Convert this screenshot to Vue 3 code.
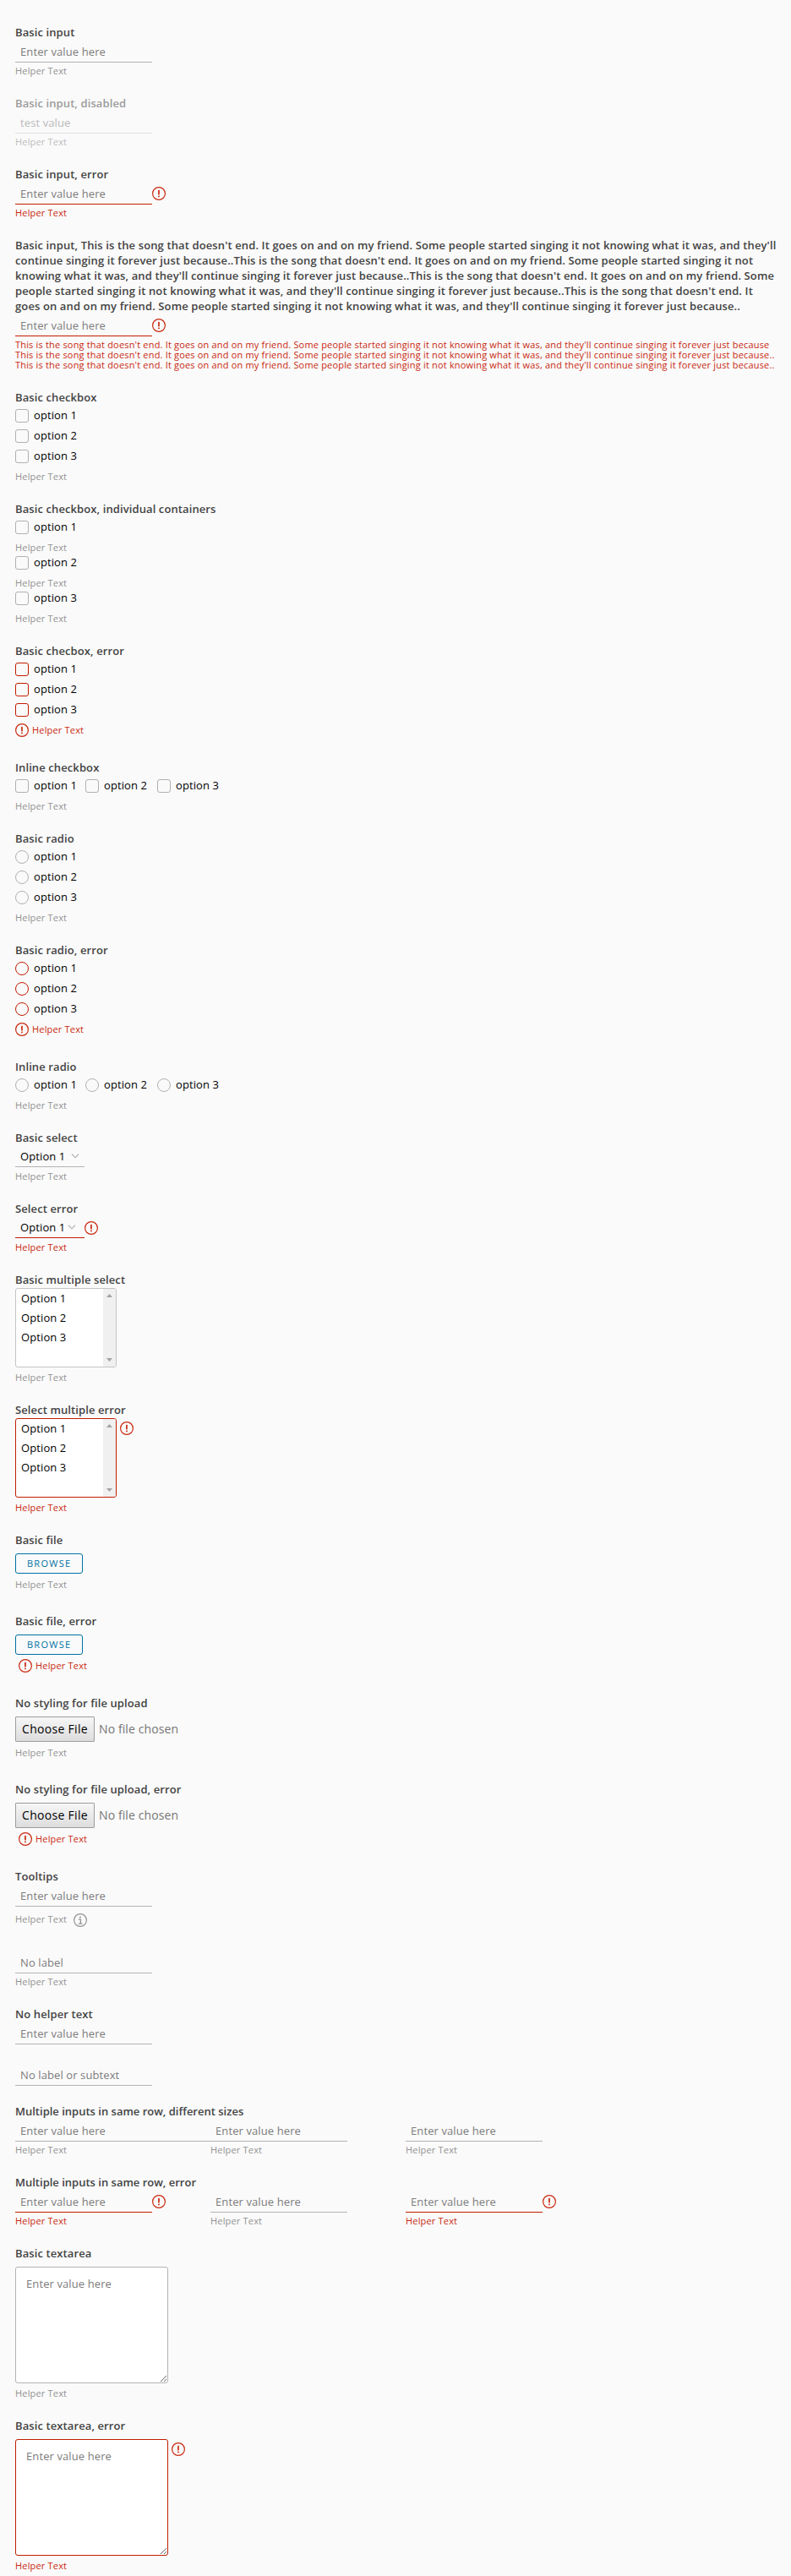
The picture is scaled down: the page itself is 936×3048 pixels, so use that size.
<script setup>
import { h } from 'vue'

const AlertIcon = () => h('svg', { class: 'alert', viewBox: '0 0 16 16', width: 16, height: 16 }, [
  h('circle', { cx: 8, cy: 8, r: 7.4, fill: 'none', stroke: '#c9280e', 'stroke-width': 1.2 }),
  h('rect', { x: 7.1, y: 3.8, width: 1.7, height: 5.6, rx: 0.4, fill: '#c9280e' }),
  h('rect', { x: 7.1, y: 10.5, width: 1.7, height: 1.7, rx: 0.5, fill: '#c9280e' }),
])

const options = [1, 2, 3]
const hint = 'Enter value here'

const longLabel = [
  "Basic input, This is the song that doesn't end. It goes on and on my friend. Some people started singing it not knowing what it was, and they'll",
  "continue singing it forever just because..This is the song that doesn't end. It goes on and on my friend. Some people started singing it not",
  "knowing what it was, and they'll continue singing it forever just because..This is the song that doesn't end. It goes on and on my friend. Some",
  "people started singing it not knowing what it was, and they'll continue singing it forever just because..This is the song that doesn't end. It",
  "goes on and on my friend. Some people started singing it not knowing what it was, and they'll continue singing it forever just because..",
]
const song = "This is the song that doesn't end. It goes on and on my friend. Some people started singing it not knowing what it was, and they'll continue singing it forever just because"
const longHelper = [song, song + '..', song + '..']

const textFields = [
  { label: ['Basic input'], helper: ['Helper Text'] },
  { label: ['Basic input, disabled'], helper: ['Helper Text'], disabled: true, value: 'test value' },
  { label: ['Basic input, error'], helper: ['Helper Text'], error: true },
  { label: longLabel, helper: longHelper, error: true, long: true },
]

const choiceGroups = [
  { label: 'Basic checkbox', type: 'checkbox' },
  { label: 'Basic checkbox, individual containers', type: 'checkbox', separate: true },
  { label: 'Basic checbox, error', type: 'checkbox', error: true },
  { label: 'Inline checkbox', type: 'checkbox', inline: true },
  { label: 'Basic radio', type: 'radio' },
  { label: 'Basic radio, error', type: 'radio', error: true },
  { label: 'Inline radio', type: 'radio', inline: true },
]

const selects = [
  { label: 'Basic select' },
  { label: 'Select error', error: true },
]
const multiSelects = [
  { label: 'Basic multiple select' },
  { label: 'Select multiple error', error: true },
]
const files = [
  { label: 'Basic file' },
  { label: 'Basic file, error', error: true },
]
const plainFiles = [
  { label: 'No styling for file upload' },
  { label: 'No styling for file upload, error', error: true },
]
const rows = [
  { label: 'Multiple inputs in same row, different sizes', cells: [{ wide: true }, {}, {}] },
  { label: 'Multiple inputs in same row, error', cells: [{ error: true }, {}, { error: true }] },
]
const areas = [
  { label: 'Basic textarea' },
  { label: 'Basic textarea, error', error: true },
]
</script>

<template>
  <form class="forms">
    <section v-for="f in textFields" :key="f.label[0]" class="group" :class="{ error: f.error, disabled: f.disabled, long: f.long }">
      <label class="label"><span v-for="l in f.label" :key="l" class="line">{{ l }}</span></label>
      <div class="control">
        <input class="input" type="text" :placeholder="hint" :value="f.value" :disabled="f.disabled">
        <AlertIcon v-if="f.error" />
      </div>
      <div class="helper"><span v-for="(l, i) in f.helper" :key="i" class="line">{{ l }}</span></div>
    </section>

    <section v-for="g in choiceGroups" :key="g.label" class="group" :class="{ error: g.error }">
      <label class="label">{{ g.label }}</label>
      <div class="choices" :class="{ inline: g.inline }">
        <template v-for="n in options" :key="n">
          <label class="choice"><span class="box" :class="g.type"></span><span class="caption">option {{ n }}</span></label>
          <div v-if="g.separate" class="helper spaced">Helper Text</div>
        </template>
      </div>
      <div v-if="g.error" class="helper with-icon"><AlertIcon />Helper Text</div>
      <div v-else-if="!g.separate" class="helper spaced">Helper Text</div>
    </section>

    <section v-for="s in selects" :key="s.label" class="group" :class="{ error: s.error }">
      <label class="label">{{ s.label }}</label>
      <div class="control select-row">
        <div class="select">
          <span>Option 1</span>
          <svg class="chevron" viewBox="0 0 10 6" width="10" height="6"><path d="M1 0.7 L5 4.8 L9 0.7" fill="none" stroke="#a8a8a8" stroke-width="1.1" /></svg>
        </div>
        <AlertIcon v-if="s.error" />
      </div>
      <div class="helper">Helper Text</div>
    </section>

    <section v-for="m in multiSelects" :key="m.label" class="group" :class="{ error: m.error }">
      <label class="label">{{ m.label }}</label>
      <div class="multi-row">
        <div class="listbox">
          <div class="list"><div v-for="n in options" :key="n" class="item">Option {{ n }}</div></div>
          <div class="scrollbar">
            <svg viewBox="0 0 7 4" width="7" height="4"><path d="M0 4 L3.5 0 L7 4Z" fill="#a3a3a3" /></svg>
            <svg viewBox="0 0 7 4" width="7" height="4"><path d="M0 0 L3.5 4 L7 0Z" fill="#a3a3a3" /></svg>
          </div>
        </div>
        <AlertIcon v-if="m.error" />
      </div>
      <div class="helper spaced">Helper Text</div>
    </section>

    <section v-for="f in files" :key="f.label" class="group file" :class="{ error: f.error }">
      <label class="label">{{ f.label }}</label>
      <button type="button" class="browse">BROWSE</button>
      <div class="helper" :class="f.error ? 'file-error' : 'file-helper'"><AlertIcon v-if="f.error" />Helper Text</div>
    </section>

    <section v-for="f in plainFiles" :key="f.label" class="group file" :class="{ error: f.error }">
      <label class="label">{{ f.label }}</label>
      <div class="native"><button type="button" class="choose">Choose File</button><span class="status">No file chosen</span></div>
      <div class="helper" :class="f.error ? 'file-error' : 'file-helper'"><AlertIcon v-if="f.error" />Helper Text</div>
    </section>

    <section class="group tooltip">
      <label class="label">Tooltips</label>
      <div class="control"><input class="input" type="text" :placeholder="hint"></div>
      <div class="helper tip">
        <span class="caption">Helper Text</span>
        <svg viewBox="0 0 16 16" width="16" height="16">
          <circle cx="8" cy="8" r="7.4" fill="none" stroke="#929292" stroke-width="1.2" />
          <circle cx="7.9" cy="4.5" r="1.1" fill="#929292" />
          <path d="M6 7.1 H8.4 V11.8 M5.7 12 H10.4" fill="none" stroke="#929292" stroke-width="1.25" />
        </svg>
      </div>
    </section>

    <section class="group">
      <div class="control"><input class="input" type="text" placeholder="No label"></div>
      <div class="helper">Helper Text</div>
    </section>

    <section class="group bare">
      <label class="label">No helper text</label>
      <div class="control"><input class="input" type="text" :placeholder="hint"></div>
    </section>

    <section class="group unlabelled">
      <div class="control"><input class="input" type="text" placeholder="No label or subtext"></div>
    </section>

    <section v-for="r in rows" :key="r.label" class="group">
      <label class="label tight">{{ r.label }}</label>
      <div class="columns">
        <div v-for="(c, i) in r.cells" :key="i" :class="{ error: c.error }">
          <div class="control">
            <input class="input" :class="{ wide: c.wide }" type="text" :placeholder="hint">
            <AlertIcon v-if="c.error" />
          </div>
          <div class="helper">Helper Text</div>
        </div>
      </div>
    </section>

    <section v-for="a in areas" :key="a.label" class="group" :class="{ error: a.error }">
      <label class="label">{{ a.label }}</label>
      <div class="area-row">
        <textarea class="area" :placeholder="hint"></textarea>
        <AlertIcon v-if="a.error" />
      </div>
      <div class="helper spaced">Helper Text</div>
    </section>
  </form>
</template>

<style>
body { background: #fafafa; }
</style>

<style scoped>
.forms {
  padding: 30px 0 0 18px;
  font: 400 13px/24px "Open Sans", "Liberation Sans", sans-serif;
  letter-spacing: 0.1px;
  color: #000;
  white-space: nowrap;
}
.group { display: flex; flex-direction: column; align-items: flex-start; margin-bottom: 24px; }
.label { display: block; margin-top: -1px; padding-bottom: 1px; font-weight: 600; line-height: 18px; color: #434343; }
.label.tight { letter-spacing: 0; }
.line { display: block; }
.long .label { letter-spacing: 0.12px; }
.control { display: flex; align-items: flex-start; margin-top: 2px; }
.control :deep(.alert) { margin-top: 3px; }
.alert, svg { display: block; flex: none; }
.caption { padding-bottom: 2px; }
.status { padding-bottom: 1px; }
.input {
  box-sizing: border-box; width: 162px; height: 24px; margin: 0; padding: 0 6px 1px;
  border: 0; border-bottom: 1px solid #b3b3b3; border-radius: 0; outline: 0; background: transparent;
  font: inherit; letter-spacing: inherit; color: #000;
}
.input.wide { width: 231px; }
.input::placeholder, .area::placeholder { color: #7c7c7c; opacity: 1; }
.helper { margin-top: 4px; font-size: 11px; line-height: 12px; letter-spacing: 0.18px; color: #929292; }
.helper.spaced { margin-top: 6px; }
.helper.with-icon { display: flex; align-items: center; gap: 4px; height: 24px; margin-top: 0; }

.error .input, .error .select { border-bottom-color: #c21d00; }
.error .helper { color: #c9280e; }
.disabled .label { color: #9c9c9c; }
.disabled .input { border-color: #e0e0e0; color: #b9b9b9; }
.disabled .helper { color: #bcbcbc; }

.choices { display: flex; flex-direction: column; }
.choices.inline { display: grid; grid-template-columns: 83px 85px auto; }
.choice { display: flex; align-items: center; gap: 6px; height: 24px; }
.box { box-sizing: border-box; flex: none; width: 16px; height: 16px; border: 1px solid #b0b0b0; border-radius: 3px; }
.box.radio { border-radius: 50%; }
.error .box { border-color: #c21d00; }

.select-row { margin-top: 0; }
.select-row :deep(.alert) { margin-top: 5px; }
.select {
  box-sizing: border-box; display: flex; align-items: center; justify-content: space-between;
  width: 82px; height: 25px; margin-bottom: 1px; padding: 0 6px; border-bottom: 1px solid #b3b3b3;
}
.error .chevron { margin-right: 4px; }

.multi-row, .area-row { display: flex; align-items: flex-start; gap: 4px; }
.multi-row :deep(.alert) { margin-top: 4px; }
.listbox {
  box-sizing: border-box; display: flex; width: 120px; height: 94px;
  border: 1px solid #c4c4c4; border-radius: 3px; background: #fff; overflow: hidden;
}
.error .listbox { border-color: #c21d00; }
.list { flex: 1; padding-left: 6px; }
.item { height: 23px; line-height: 22px; }
.scrollbar {
  box-sizing: border-box; display: flex; flex-direction: column; align-items: center; justify-content: space-between;
  width: 15px; padding: 6px 0; background: #f0f0f0;
}

.browse {
  width: 80px; height: 24px; margin: 6px 0 0; padding: 0; border: 1px solid #0072a3; border-radius: 3px; background: transparent;
  font: 500 11px/22px "Open Sans", "Liberation Sans", sans-serif; letter-spacing: 1.3px; text-indent: 0.5px; color: #0072a3;
}
.file { margin-bottom: 29px; }
.file.error { margin-bottom: 28px; }
.file-helper { margin-top: 7px; }
.file-error { display: flex; align-items: center; gap: 4px; height: 16px; padding-left: 4px; margin-top: 5px; }

.native { display: flex; align-items: center; gap: 5px; height: 30px; margin-top: 6px; font-size: 14px; color: #757575; }
.choose {
  width: 94px; height: 30px; margin: 0; padding: 0 0 1px; border: 1px solid #9c9c9c; border-radius: 1px;
  background: linear-gradient(#f6f6f6, #dddddd);
  font: 400 14px/26px "Open Sans", "Liberation Sans", sans-serif; letter-spacing: 0.3px; color: #000;
}

.tip { display: flex; gap: 8px; align-items: center; height: 16px; margin-top: 8px; }
.tooltip { margin-bottom: 29px; }
.bare { margin-bottom: 23px; }
.unlabelled { margin-bottom: 22px; }

.columns { display: grid; grid-template-columns: 231px 231px 231px; }
.area-row { margin-top: 6px; }
.area-row :deep(.alert) { margin-top: 4px; }
.area {
  box-sizing: border-box; display: block; width: 181px; height: 138px; margin: 0; padding: 7px 12px;
  border: 1px solid #b3b3b3; border-radius: 3px; outline: 0; background: #fff;
  font: inherit; letter-spacing: inherit; resize: both;
}
.error .area { border-color: #c21d00; }
</style>
